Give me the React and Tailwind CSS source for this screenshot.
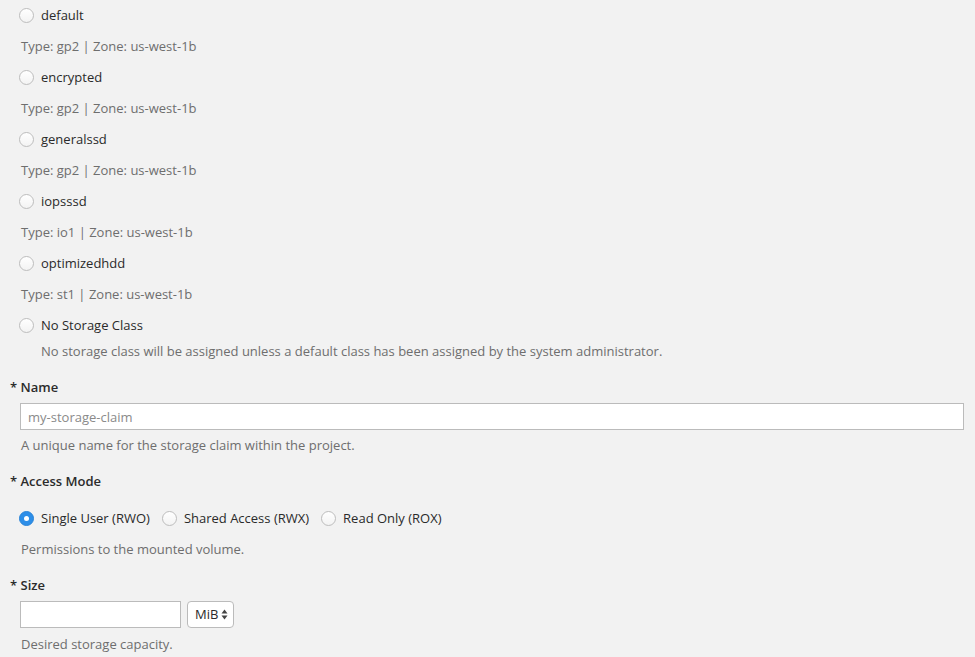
import React from "react";

const classes = [
  { name: "default", type: "gp2" },
  { name: "encrypted", type: "gp2" },
  { name: "generalssd", type: "gp2" },
  { name: "iopsssd", type: "io1" },
  { name: "optimizedhdd", type: "st1" },
];

function Radio({ checked }) {
  if (checked) {
    return (
      <span className="w-[15px] h-[15px] rounded-full bg-[#2d8ee8] border border-[#2a84d8] flex items-center justify-center shrink-0">
        <span className="w-[5px] h-[5px] rounded-full bg-white"></span>
      </span>
    );
  }
  return (
    <span className="w-[15px] h-[15px] rounded-full bg-gradient-to-b from-white to-[#f3f3f3] border border-[#bdbdbd] shrink-0"></span>
  );
}

function Label({ children }) {
  return (
    <div className="h-5 leading-5 font-semibold text-[#2b2b2b] ml-[-9px]">
      * {children}
    </div>
  );
}

export default function App() {
  const [mode, setMode] = React.useState("RWO");

  return (
    <div
      className="min-h-screen bg-[#f2f2f2] text-[13px] text-[#2a2a2a] pl-[19px] pt-[5px]"
      style={{ fontFamily: '"Open Sans", "Liberation Sans", sans-serif' }}
    >
      <div className="flex flex-col">
        {classes.map((c) => (
          <div key={c.name} className="flex flex-col gap-[11px] mb-[11px]">
            <label className="flex items-center h-5 leading-5">
              <Radio />
              <span className="ml-[7px]">{c.name}</span>
            </label>
            <div className="h-5 leading-5 text-[#6e6e6e] pl-[2px]">
              Type: {c.type} | Zone: us-west-1b
            </div>
          </div>
        ))}
        <label className="flex items-center h-5 leading-5">
          <Radio />
          <span className="ml-[7px]">No Storage Class</span>
        </label>
        <div className="h-5 leading-5 text-[#6e6e6e] pl-[22px] mt-[6px]">
          No storage class will be assigned unless a default class has been
          assigned by the system administrator.
        </div>
      </div>

      <div className="mt-[16px]">
        <Label>Name</Label>
        <input
          className="mt-[6px] block w-[944px] ml-px h-[27px] bg-white border border-[#bbb] px-[7px] placeholder:text-[#8a8a8a] outline-none"
          placeholder="my-storage-claim"
        />
        <div className="mt-[5px] h-5 leading-5 text-[#6e6e6e] pl-[2px]">
          A unique name for the storage claim within the project.
        </div>
      </div>

      <div className="mt-[16px]">
        <Label>Access Mode</Label>
        <div className="mt-[17px] flex items-center h-5 leading-5">
          {[
            ["RWO", "Single User (RWO)"],
            ["RWX", "Shared Access (RWX)"],
            ["ROX", "Read Only (ROX)"],
          ].map(([k, t]) => (
            <label
              key={k}
              className="flex items-center mr-[12px] cursor-pointer"
              onClick={() => setMode(k)}
            >
              <Radio checked={mode === k} />
              <span className="ml-[7px]">{t}</span>
            </label>
          ))}
        </div>
        <div className="mt-[11px] h-5 leading-5 text-[#6e6e6e] pl-[2px]">
          Permissions to the mounted volume.
        </div>
      </div>

      <div className="mt-[16px]">
        <Label>Size</Label>
        <div className="mt-[6px] flex items-center gap-[6px] ml-px">
          <input className="block w-[161px] h-[27px] bg-white border border-[#bbb] px-[7px] outline-none" />
          <div className="flex items-center h-[27px] w-[47px] bg-white border border-[#bbb] rounded-[4px] pl-[7px] pr-[5px] justify-between">
            <span>MiB</span>
            <svg width="7" height="11" viewBox="0 0 7 11">
              <path d="M3.5 0.5 L6.5 4.5 L0.5 4.5 Z" fill="#444" />
              <path d="M3.5 10.5 L6.5 6.5 L0.5 6.5 Z" fill="#444" />
            </svg>
          </div>
        </div>
        <div className="mt-[6px] h-5 leading-5 text-[#6e6e6e] pl-[2px]">
          Desired storage capacity.
        </div>
      </div>
    </div>
  );
}
